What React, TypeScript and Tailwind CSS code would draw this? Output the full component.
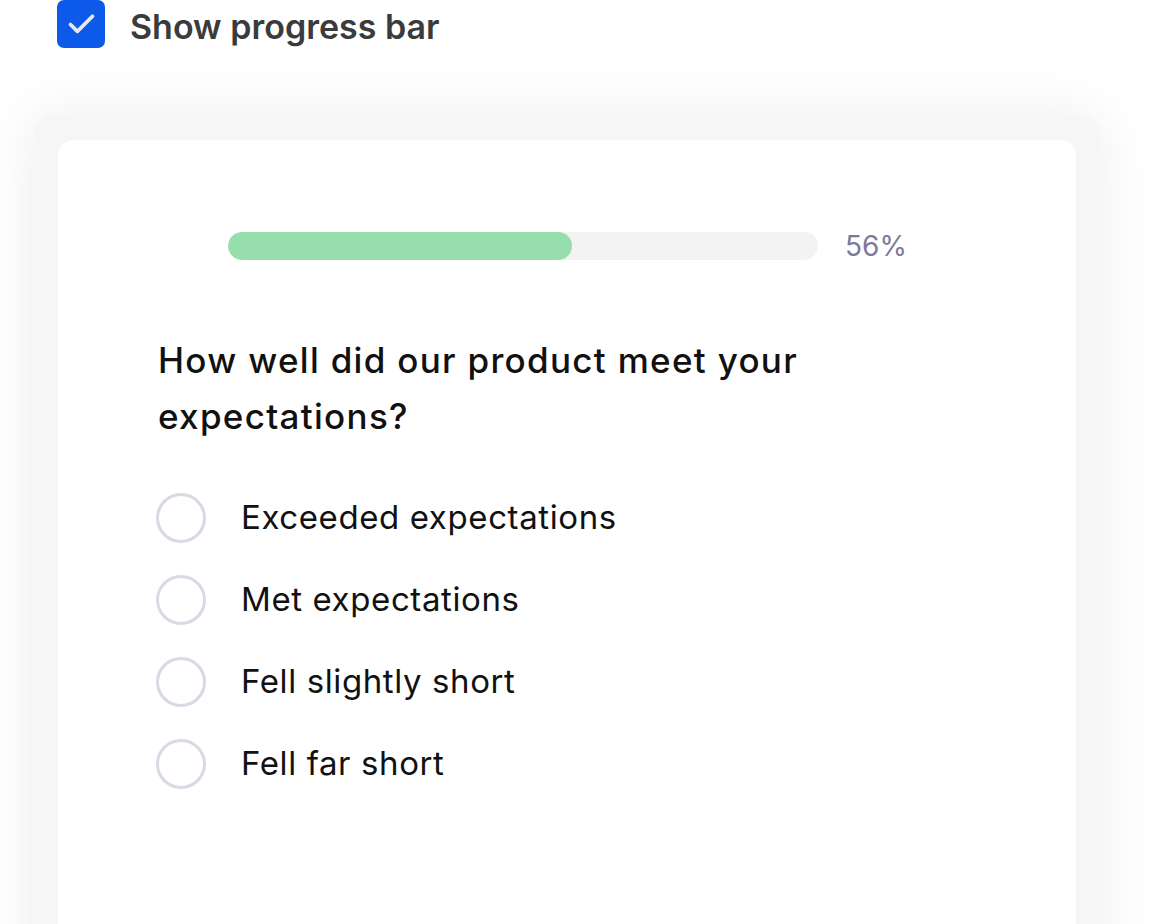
import { Check } from "lucide-react";

const options = [
  "Exceeded expectations",
  "Met expectations",
  "Fell slightly short",
  "Fell far short",
];

export default function App() {
  const progress = 56;

  return (
    <div className="h-[924px] w-[1162px] overflow-hidden bg-white font-['Inter',sans-serif]">
      <div className="flex h-[48px] items-center gap-[25px] pl-[57px]">
        <div className="flex h-[48px] w-[48px] items-center justify-center rounded-[7px] bg-[#0c59ea]">
          <Check className="h-[33px] w-[33px] text-[#e3e8f3]" strokeWidth={2.7} />
        </div>
        <span className="mt-[6px] text-[34px] leading-none font-semibold text-[#3b3b3b]">
          Show progress bar
        </span>
      </div>

      <div className="ml-[34px] mt-[68px] h-[900px] w-[1066px] rounded-[18px] bg-[#f6f6f6] px-[24px] pt-[24px] shadow-[0_0_60px_rgba(0,0,0,0.08)]">
        <div className="h-full rounded-[16px] bg-white pl-[98px] pt-[92px]">
          <div className="flex h-[28px] items-center gap-[27px] pl-[72px]">
            <div className="h-[28px] w-[590px] overflow-hidden rounded-full bg-[#f3f3f3]">
              <div
                className="h-full rounded-full bg-[#96dfac]"
                style={{ width: `${(344 / 590) * 100}%` }}
              />
            </div>
            <span className="text-[28px] leading-none text-[#7d7a99]">{progress}%</span>
          </div>

          <h2 className="mt-[72px] w-[720px] pl-[2px] text-[35px] font-medium leading-[56px] tracking-[1.3px] text-[#111]">
            How well did our product meet your expectations?
          </h2>

          <div className="mt-[49px] flex flex-col gap-[32px]">
            {options.map((o) => (
              <label key={o} className="flex items-center gap-[35px]">
                <span className="h-[50px] w-[50px] rounded-full border-[3px] border-[#d6dae3] bg-white" />
                <span className="text-[33px] tracking-[0.6px] text-[#111]">{o}</span>
              </label>
            ))}
          </div>
        </div>
      </div>
    </div>
  );
}
